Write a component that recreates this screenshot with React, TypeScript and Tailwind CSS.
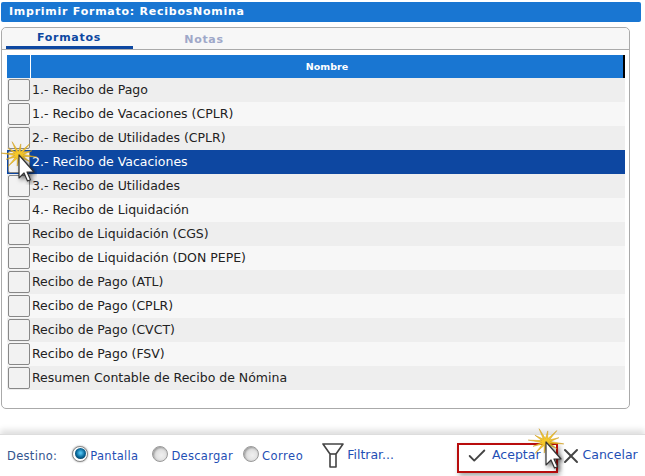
import { Check, X } from "lucide-react";

const rows = [
  "1.- Recibo de Pago",
  "1.- Recibo de Vacaciones (CPLR)",
  "2.- Recibo de Utilidades (CPLR)",
  "2.- Recibo de Vacaciones",
  "3.- Recibo de Utilidades",
  "4.- Recibo de Liquidación",
  "Recibo de Liquidación (CGS)",
  "Recibo de Liquidación (DON PEPE)",
  "Recibo de Pago (ATL)",
  "Recibo de Pago (CPLR)",
  "Recibo de Pago (CVCT)",
  "Recibo de Pago (FSV)",
  "Resumen Contable de Recibo de Nómina",
];

// star rays round the click point
const starPoints = Array.from({ length: 24 }, (_, i) => {
  const a = (i / 24) * Math.PI * 2 + 0.13;
  const long = i % 4 === 0 ? 18 : 14;
  const r = i % 2 === 0 ? long : 4.5;
  return `${(18 + r * Math.cos(a)).toFixed(1)},${(14 + r * 0.8 * Math.sin(a)).toFixed(1)}`;
}).join(" ");

function Radio({ on }: { on?: boolean }) {
  return (
    <span
      className={
        on
          ? "w-[16px] h-[16px] -mt-[6px] rounded-full border border-[#888] bg-white flex items-center justify-center shadow-[0_0_2px_#999]"
          : "w-[16px] h-[16px] -mt-[6px] rounded-full border border-[#999] bg-[radial-gradient(circle_at_60%_60%,#f0f0f0,#cfcfcf)] shadow-[inset_1px_1px_2px_#999]"
      }
    >
      {on && <span className="w-[11px] h-[11px] rounded-full bg-[radial-gradient(circle_at_50%_45%,#4fc0ee_10%,#0b6a9c_50%,#05263c)]" />}
    </span>
  );
}

function ClickMark({ className }: { className: string }) {
  return (
    <svg width="36" height="44" viewBox="0 0 36 44" className={className}>
      <polygon points={starPoints} fill="#f6c92a" stroke="#c9961a" strokeWidth="0.5" />
      <path
        d="M18 14v23l5-5 3.5 8 3-1.3-3.5-7.7h7z"
        fill="#fff"
        stroke="#333"
        strokeWidth="1.2"
        strokeLinejoin="round"
        style={{ filter: "drop-shadow(2px 2px 2px rgba(0,0,0,.55))" }}
      />
    </svg>
  );
}

export default function App() {
  return (
    <div className="relative w-[645px] h-[476px] overflow-hidden bg-white font-['DejaVu_Sans',sans-serif] pt-[2px]">
      {/* Title */}
      <div className="ml-[1px] w-[640px] h-[20px] bg-[#1976d2] rounded-[2px] px-[8px] flex items-center text-white text-[11px] font-bold tracking-[0.75px]">
        Imprimir Formato: RecibosNomina
      </div>

      {/* Panel */}
      <div className="mt-[5px] ml-[1px] w-[629px] h-[382px] border border-[#aaa] rounded-[5px] bg-white">
        <div className="h-[22px] border-b border-[#aaa] bg-[#f7f7f7] rounded-t-[5px] flex text-[11px] font-bold tracking-[0.7px]">
          <div className="w-[127px] ml-[4px] h-[21px] border-b-[3px] border-[#0d47a1] text-[#0d47a1] flex items-center justify-center pt-[3px] pr-[1px]">
            Formatos
          </div>
          <div className="w-[127px] h-[21px] text-[#9fa8c9] flex items-center justify-center pt-[3px] pl-[15px]">Notas</div>
        </div>

        <div className="mt-[5px] ml-[5px] w-[618px]">
          <div className="h-[23px] flex bg-[#1976d2] border-r-2 border-black">
            <div className="w-[24px] border-r border-white" />
            <div className="flex-1 flex items-center justify-center text-white text-[9.5px] font-bold pt-[1px]">Nombre</div>
          </div>
          {rows.map((r, i) => (
            <div
              key={r}
              className={
                "h-[24px] flex items-center text-[12.5px] " +
                (i === 3 ? "bg-[#0d47a1] text-white" : i % 2 === 0 ? "bg-[#eeeeee] text-[#222]" : "bg-[#f7f7f7] text-[#222]")
              }
            >
              <div className="ml-[1px] w-[22px] h-[22px] border border-[#888] rounded-[2px] bg-[#f2f2f2]" />
              <span className="ml-[2px]">{r}</span>
            </div>
          ))}
        </div>
      </div>

      {/* Footer */}
      <div className="mt-[25px] h-[42px] pt-[2px] border-t border-[#ddd] shadow-[0_-4px_6px_rgba(0,0,0,0.13)] flex items-center text-[11.5px] tracking-[0.3px] text-[#1f4fb5]">
        <span className="ml-[7px] text-[#33558f]">Destino:</span>
        <div className="ml-[15px] flex items-center gap-[2px]">
          <Radio on />
          <span>Pantalla</span>
        </div>
        <div className="ml-[14px] flex items-center gap-[3px]">
          <Radio />
          <span>Descargar</span>
        </div>
        <div className="ml-[10px] flex items-center gap-[3px]">
          <Radio />
          <span className="tracking-[0.5px]">Correo</span>
        </div>
        <div className="ml-[19px] flex items-center gap-[3px] text-[12.5px] tracking-normal -mt-[2px]">
          <svg width="22" height="25" viewBox="0 0 22 25" fill="none" stroke="#444" strokeWidth="1.6">
            <path d="M1 1h20l-7 10v13h-6V11z" strokeLinejoin="round" />
            <path d="M8 11h6" />
          </svg>
          <span>Filtrar...</span>
        </div>
        <div className="ml-[72px] flex items-center text-[12.5px] tracking-normal -mt-[2px]">
          <Check size={22} strokeWidth={2} color="#444" />
          <span className="ml-[4px]">Aceptar</span>
        </div>
        <div className="ml-[18px] flex items-center text-[12.5px] tracking-normal -mt-[2px]">
          <X size={24} strokeWidth={2} color="#444" />
          <span className="ml-[0px]">Cancelar</span>
        </div>
      </div>

      {/* Overlays */}
      <div className="absolute left-[457px] top-[443px] w-[101px] h-[30px] border-[2px] border-[#b80c0c] shadow-[2px_3px_5px_rgba(0,0,0,0.35)]" />
      <ClickMark className="absolute left-[1px] top-[141px]" />
      <ClickMark className="absolute left-[528px] top-[428px]" />
    </div>
  );
}
